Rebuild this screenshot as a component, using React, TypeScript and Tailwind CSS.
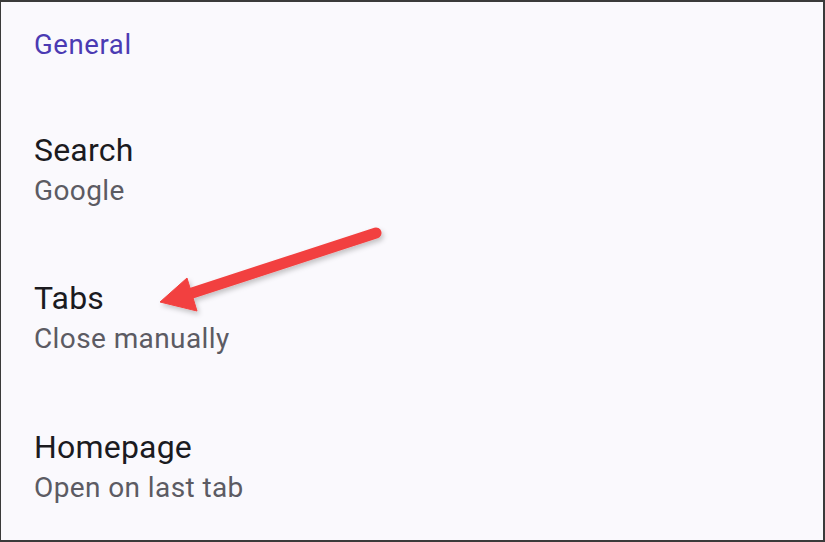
import React from "react";

type Item = { title: string; value: string };

const items: Item[] = [
  { title: "Search", value: "Google" },
  { title: "Tabs", value: "Close manually" },
  { title: "Homepage", value: "Open on last tab" },
];

function Arrow() {
  return (
    <svg
      className="absolute left-0 top-0 pointer-events-none"
      width="825"
      height="542"
      viewBox="0 0 825 542"
    >
      <defs>
        <filter id="sh" x="-20%" y="-20%" width="140%" height="140%">
          <feDropShadow dx="2" dy="3" stdDeviation="2.5" floodColor="#000" floodOpacity="0.22" />
        </filter>
      </defs>
      <g filter="url(#sh)" fill="#f2413f" stroke="#f2413f">
        <line x1="375" y1="231" x2="185" y2="293" strokeWidth="11" strokeLinecap="round" />
        <polygon points="159,300 186,276 196,309" strokeWidth="1" strokeLinejoin="round" />
      </g>
    </svg>
  );
}

export default function App() {
  return (
    <div
      className="relative h-[542px] w-full overflow-hidden bg-[#faf9fd] border-t-2 border-r-2 border-b-2 border-l border-[#3a3a3a] pl-[33px] pt-[27px]"
      style={{ fontFamily: "Roboto, 'Noto Sans', sans-serif" }}
    >
      <div className="text-[27.5px] leading-[32px] tracking-[0.6px] text-[#4b3bb3]">General</div>

      {items.map((it, i) => (
        <div key={it.title} className={i === 2 ? "mt-[70px]" : "mt-[69px]"}>
          <div className="text-[32px] leading-[40px] tracking-[0.2px] text-[#1b1b1f]">{it.title}</div>
          <div className="mt-[3px] text-[28px] leading-[36px] tracking-[0.4px] text-[#5c5b63]">{it.value}</div>
        </div>
      ))}

      <Arrow />
    </div>
  );
}
